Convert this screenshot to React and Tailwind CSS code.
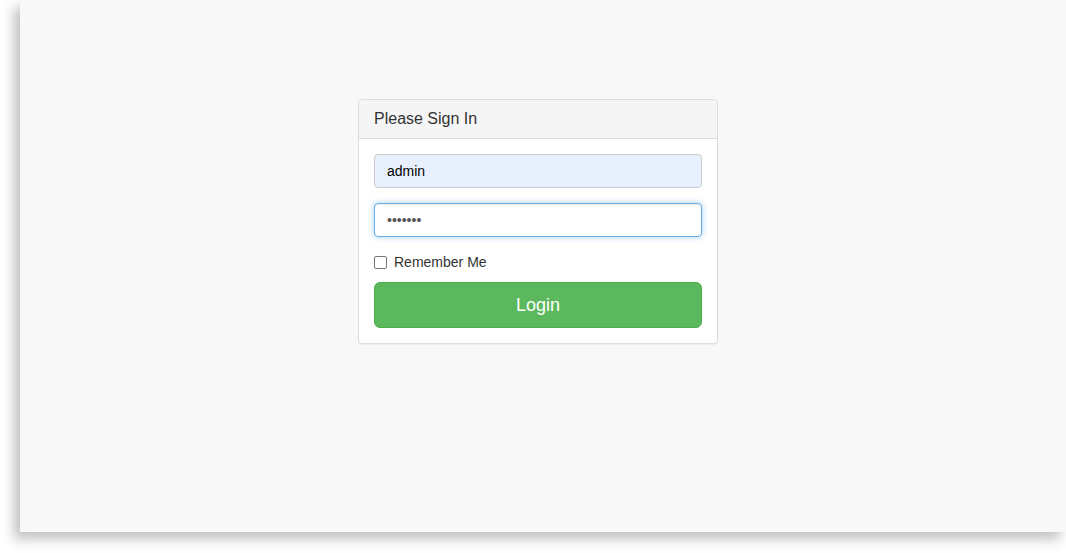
export default function App() {
  return (
    <div className="w-[1066px] h-[553px] bg-white overflow-hidden" style={{ fontFamily: '"Liberation Sans", Arial, sans-serif' }}>
      <div className="ml-[20px] w-[1046px] h-[532px] bg-[#f8f8f8] shadow-[-6px_7px_12px_rgba(0,0,0,0.25)] pt-[99px] pl-[338px]">
        <div className="w-[360px] bg-white border border-[#dddddd] rounded-[4px] shadow-[0_1px_1px_rgba(0,0,0,0.05)]">
          <div className="h-[39px] bg-[#f5f5f5] border-b border-[#dddddd] rounded-t-[3px] px-[15px] flex items-center text-[16px] text-[#333333]">
            Please Sign In
          </div>
          <div className="p-[15px] flex flex-col">
            <div className="h-[34px] rounded-[4px] border border-[#cccccc] bg-[#e8f0fe] px-[12px] flex items-center text-[14px] text-black">
              admin
            </div>
            <div className="mt-[15px] h-[34px] rounded-[4px] border border-[#66afe9] bg-white px-[12px] flex items-center text-[14px] text-[#555555] shadow-[inset_0_1px_1px_rgba(0,0,0,0.075),0_0_6px_rgba(102,175,233,0.6)]">
              •••••••
            </div>
            <label className="mt-[17px] flex items-center text-[14px] text-[#333333] h-[16px]">
              <span className="w-[13px] h-[13px] border border-[#767676] rounded-[2px] bg-white mr-[7px]" />
              Remember Me
            </label>
            <div className="mt-[12px] h-[46px] rounded-[6px] bg-[#5cb85c] border border-[#4cae4c] flex items-center justify-center text-[18px] text-white">
              Login
            </div>
          </div>
        </div>
      </div>
    </div>
  );
}
